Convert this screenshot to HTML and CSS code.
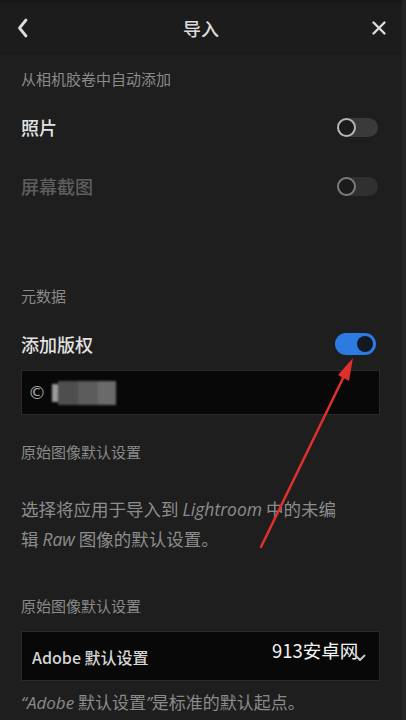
FILE: index.html
```html
<!DOCTYPE html>
<html lang="zh">
<head>
<meta charset="utf-8">
<title>导入</title>
<link rel="stylesheet" href="styles.css">
</head>
<body>
<div class="app">
  <header class="topbar">
    <svg class="icon back" width="14" height="22" viewBox="0 0 14 22"><path d="M10 3 L3.5 11 L10 19" fill="none" stroke="#dcdcdc" stroke-width="2.8" stroke-linecap="round" stroke-linejoin="round"/></svg>
    <div class="title">导入</div>
    <svg class="icon close" width="16" height="16" viewBox="0 0 16 16"><path d="M2.5 2.5 L13.5 13.5 M13.5 2.5 L2.5 13.5" fill="none" stroke="#dcdcdc" stroke-width="2.4" stroke-linecap="round"/></svg>
  </header>

  <main class="content">
    <div class="label l1">从相机胶卷中自动添加</div>
    <div class="row r1">
      <span class="row-text">照片</span>
      <span class="toggle"><span class="knob"></span></span>
    </div>
    <div class="row r2 disabled">
      <span class="row-text">屏幕截图</span>
      <span class="toggle"><span class="knob"></span></span>
    </div>

    <div class="label l2">元数据</div>
    <div class="row r3">
      <span class="row-text">添加版权</span>
      <span class="toggle on"><span class="knob"></span></span>
    </div>
    <div class="field copyright">
      <span class="copy-sign">©</span>
      <span class="blur"><span class="b1"></span><span class="b2"></span><span class="b3"></span><span class="b4"></span></span>
    </div>

    <div class="label l3">原始图像默认设置</div>
    <p class="desc">选择将应用于导入到 <i>Lightroom</i> 中的未编<br>辑 <i>Raw</i> 图像的默认设置。</p>

    <div class="label l4">原始图像默认设置</div>
    <div class="field select">
      <span class="select-text">Adobe 默认设置</span>
      <span class="watermark">913安卓网</span>
      <svg class="chev" width="12" height="8" viewBox="0 0 12 8"><path d="M1.5 1.5 L6 6 L10.5 1.5" fill="none" stroke="#c4c4c4" stroke-width="2" stroke-linecap="round" stroke-linejoin="round"/></svg>
    </div>
    <p class="note"><i>“Adobe</i> 默认设置<i>”</i>是标准的默认起点。</p>
  </main>

  <svg class="arrow" width="406" height="720" viewBox="0 0 406 720">
    <line x1="261" y1="547" x2="346" y2="372" stroke="#e0302c" stroke-width="2.5" stroke-linecap="round"/>
    <polygon points="353,358 349,381 338,375" fill="#e0302c"/>
  </svg>
</div>
</body>
</html>
```

FILE: styles.css
```css
* { box-sizing: border-box; }
html, body {
  margin: 0;
  padding: 0;
  background: #1d1d1d;
}
body {
  font-family: "Noto Sans CJK SC", "Noto Sans", sans-serif;
  color: #e0e0e0;
}
.app {
  position: relative;
  width: 406px;
  height: 720px;
  overflow: hidden;
  background: #1e1e1e;
  border-right: 4px solid #242424;
}
.topbar {
  height: 54px;
  display: grid;
  grid-template-columns: 60px 1fr 60px;
  align-items: center;
  background: #1c1c1c;
  border-top: 3px solid #171717;
  border-bottom: 1px solid #181818;
}
.back { justify-self: start; margin-left: 16px; }
.close { justify-self: end; margin-right: 15px; }
.title {
  text-align: center;
  font-size: 18px;
  font-weight: 500;
  color: #dcdcdc;
  line-height: 24px;
}
.content {
  padding: 0 21px 0 21px;
  display: flex;
  flex-direction: column;
}
.label {
  height: 20px;
  line-height: 20px;
  font-size: 15px;
  color: #8a8a8a;
}
.l1 { margin-top: 15px; }
.l2 { margin-top: 78px; }
.l3 { margin-top: 27px; }
.l4 { margin-top: 42px; }
.row {
  height: 44px;
  display: flex;
  align-items: center;
  justify-content: space-between;
}
.r1 { margin-top: 16px; }
.r2 { margin-top: 15px; }
.r3 { margin-top: 16px; }
.row-text {
  font-size: 18px;
  font-weight: 500;
  color: #e2e2e2;
}
.disabled .row-text { color: #5e5e5e; }
.toggle {
  position: relative;
  width: 41px;
  height: 19px;
  border-radius: 10px;
  background: #3a3a3a;
  margin-right: 3px;
  display: flex;
  align-items: center;
}
.toggle .knob {
  width: 19px;
  height: 19px;
  border-radius: 50%;
  border: 2px solid #b4b4b4;
  background: #1b1b1b;
}
.disabled .toggle { background: #303030; }
.disabled .toggle .knob { border-color: #7a7a7a; }
.toggle.on {
  background: #2b7be2;
  height: 22px;
  border-radius: 11px;
  justify-content: flex-end;
  padding-right: 3px;
  margin-right: 5px;
}
.toggle.on .knob {
  width: 16px;
  height: 16px;
  border: none;
  background: #141821;
}
.field {
  background: #080808;
  border: 1px solid #2a2a2a;
  width: 359px;
  display: flex;
  align-items: center;
  position: relative;
}
.copyright {
  margin-top: 4px;
  height: 45px;
  padding-left: 6px;
}
.copy-sign {
  font-family: "DejaVu Sans", sans-serif;
  font-size: 18px;
  color: #a8a8a8;
}
.blur {
  display: flex;
  margin-left: 6px;
  height: 24px;
  filter: blur(1px);
}
.blur span { display: block; height: 24px; }
.blur .b1 { width: 6px; background: #9a9a9a; height: 18px; margin-top: 3px; }
.blur .b2 { width: 20px; background: #4e4e4e; }
.blur .b3 { width: 20px; background: #5c5c5c; }
.blur .b4 { width: 18px; background: #6a6a6a; }
.desc {
  margin: 32px 0 0;
  font-size: 17.5px;
  line-height: 30px;
  color: #8c8c8c;
}
.desc i, .note i { font-family: "Open Sans", "Noto Sans", sans-serif; }
.select {
  margin-top: 15px;
  height: 50px;
  padding-left: 10px;
}
.select-text {
  font-size: 16px;
  font-weight: 500;
  color: #d6d6d6;
  margin-top: 2px;
}
.chev {
  position: absolute;
  right: 13px;
  top: 22px;
}
.watermark {
  position: absolute;
  left: 250px;
  top: 5px;
  font-size: 18.5px;
  color: #f4f4f4;
}
.note {
  margin: 6px 0 0;
  font-size: 17px;
  line-height: 30px;
  color: #8a8a8a;
  white-space: nowrap;
}
.arrow {
  position: absolute;
  left: 0;
  top: 0;
  pointer-events: none;
}
```
